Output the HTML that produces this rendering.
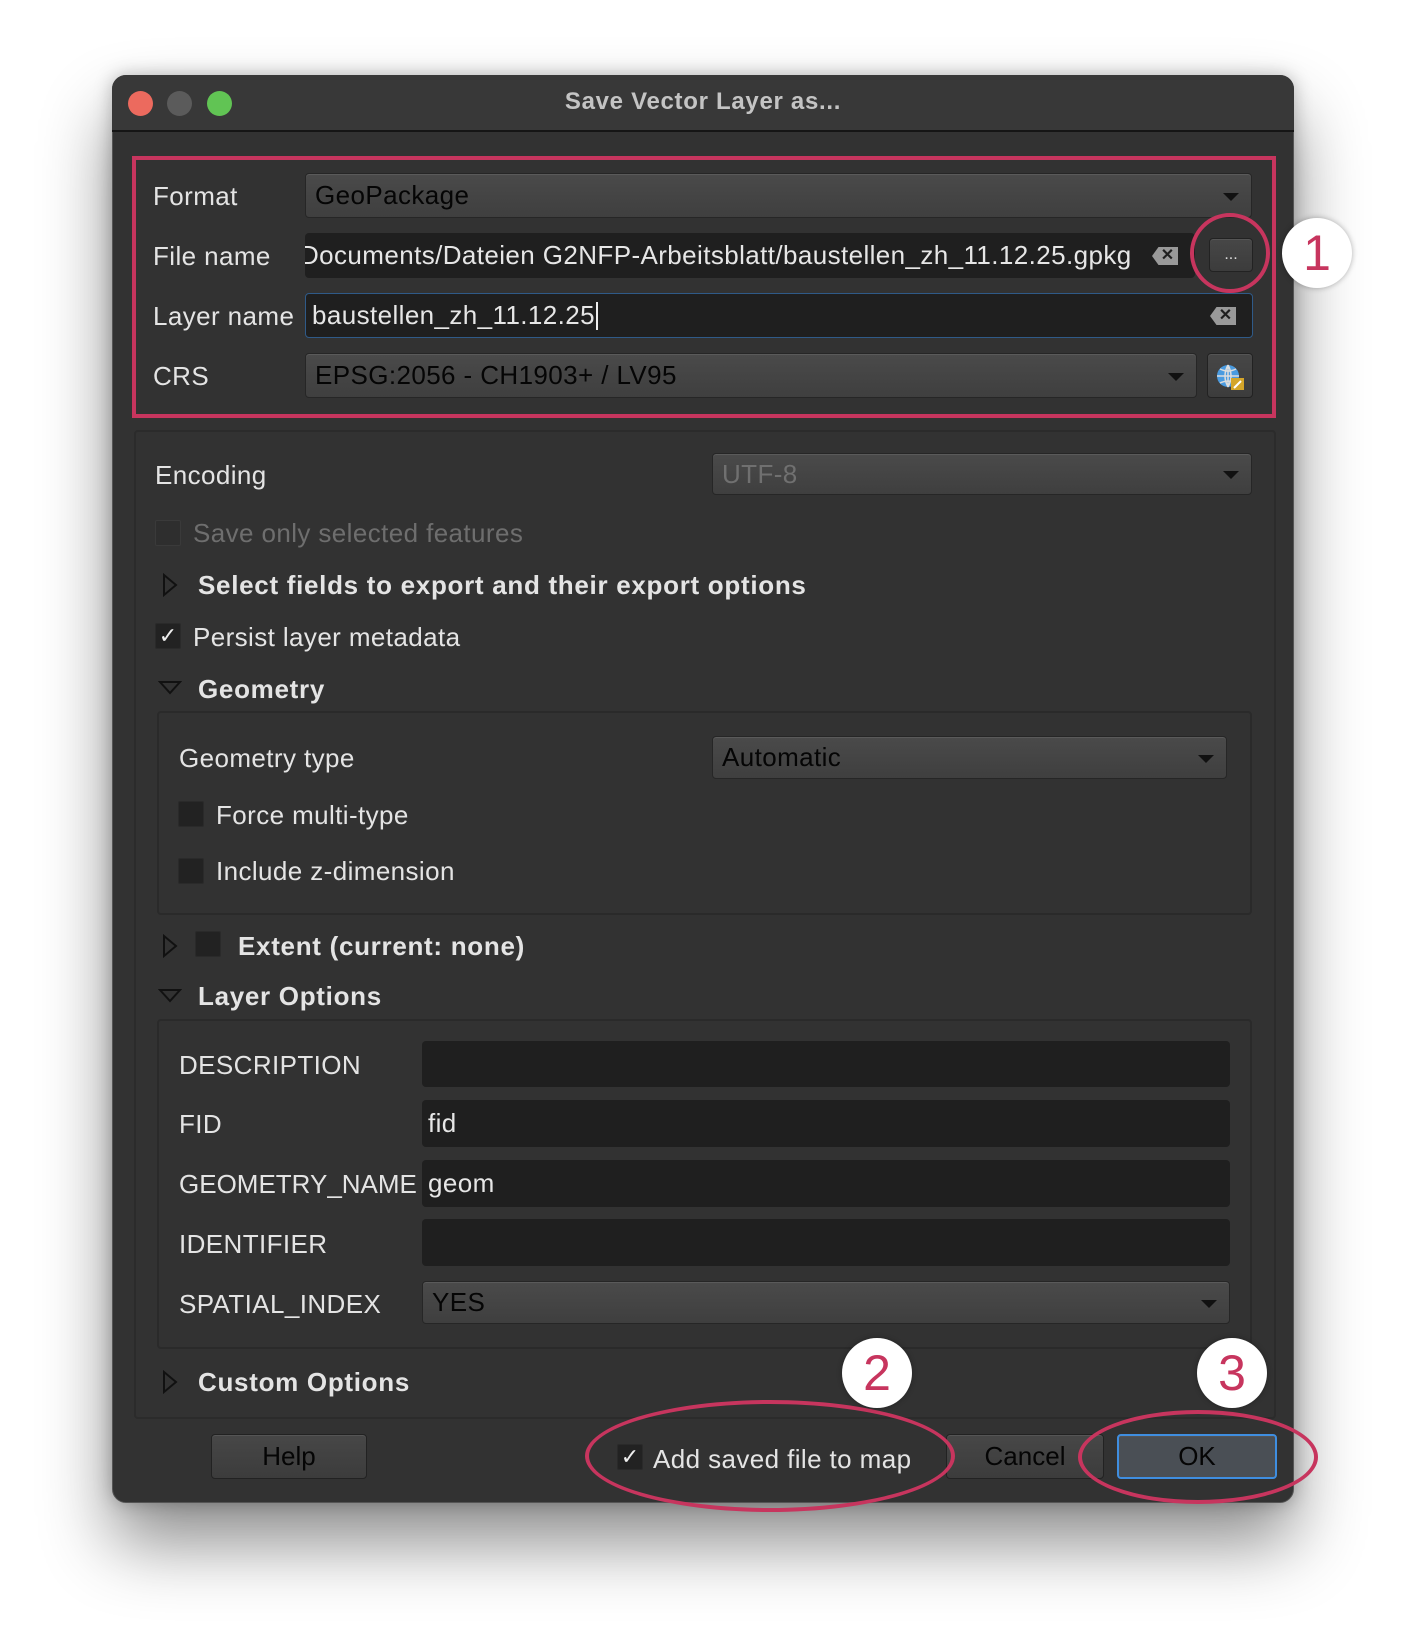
<!DOCTYPE html>
<html><head><meta charset="utf-8"><style>
*{box-sizing:border-box;margin:0;padding:0}
body{width:1406px;height:1650px;background:#fff;position:relative;overflow:hidden;font-family:"Liberation Sans",sans-serif;color:#e4e4e4}
.a{position:absolute}
.win{left:112px;top:75px;width:1182px;height:1428px;background:#323232;border-radius:14px;box-shadow:0 40px 70px rgba(0,0,0,.45),0 0 18px rgba(0,0,0,.25);border:1px solid #555}
.tb{left:112px;top:75px;width:1182px;height:57px;background:#383838;border-radius:14px 14px 0 0;border-bottom:2px solid #151515}
.dot{width:25px;height:25px;border-radius:50%;top:91px}
.lbl{font-size:26px;line-height:30px;transform:translateY(-50%);letter-spacing:0.4px;white-space:nowrap}
.b{font-weight:bold;letter-spacing:0.7px}
.combo{background:linear-gradient(#4a4a4a,#3f3f3f);border:1px solid #262626;border-radius:4px;box-shadow:inset 0 1px 0 #5a5a5a;color:#050505;font-size:26px;letter-spacing:0.4px;padding-left:9px;display:flex;align-items:center}
.combo:after{content:"";position:absolute;right:12px;top:50%;margin-top:-3px;border-left:8px solid transparent;border-right:8px solid transparent;border-top:8px solid #111}
.field{background:#1f1f1f;border-radius:4px;font-size:26px;letter-spacing:0.4px;color:#e6e6e6;padding-left:6px;display:flex;align-items:center;overflow:hidden;white-space:nowrap}
.cb{width:26px;height:26px;background:#222;border:1px solid #2a2a2a;border-radius:2px;color:#eee;font-size:22px;line-height:24px;text-align:center}
.btn{background:linear-gradient(#474747,#3c3c3c);border:1px solid #222;border-radius:4px;box-shadow:inset 0 1px 0 #555;color:#050505;font-size:26px;display:flex;align-items:center;justify-content:center}
.box{border:2px solid #2a2a2a;border-radius:4px}
.clr{width:26px;height:18px;background:#999;clip-path:polygon(25% 0,100% 0,100% 100%,25% 100%,0 50%);color:#1f1f1f;font-size:16px;font-weight:bold;text-align:center;line-height:18px;padding-left:5px}
.num{width:70px;height:70px;border-radius:50%;background:#fff;color:#c7355e;font-size:50px;text-align:center;line-height:70px;box-shadow:0 0 6px rgba(0,0,0,.3)}
</style></head><body>
<div class="a win"></div>
<div class="a tb"></div>
<div class="a dot" style="left:128px;background:#ec6a5e"></div>
<div class="a dot" style="left:167px;background:#5b5b5b"></div>
<div class="a dot" style="left:207px;background:#61c454"></div>
<div class="a b" style="left:112px;width:1182px;top:88px;text-align:center;font-size:24px;color:#c4c4c4">Save Vector Layer as...</div>

<div class="a lbl" style="left:153px;top:196px">Format</div>
<div class="a combo" style="left:305px;top:173px;width:947px;height:45px">GeoPackage</div>
<div class="a lbl" style="left:153px;top:256px">File name</div>
<div class="a field" style="left:305px;top:233px;width:890px;height:45px;padding-left:0"><span style="margin-left:-5px">Documents/Dateien G2NFP-Arbeitsblatt/baustellen_zh_11.12.25.gpkg</span></div>
<div class="a clr" style="left:1152px;top:247px">✕</div>
<div class="a btn" style="left:1209px;top:238px;width:44px;height:34px;color:#ddd;font-size:16px">...</div>
<div class="a lbl" style="left:153px;top:316px">Layer name</div>
<div class="a field" style="left:305px;top:293px;width:948px;height:45px;border:1px solid #2f5a88">baustellen_zh_11.12.25<span style="display:inline-block;width:2px;height:28px;background:#eee;margin-left:1px"></span></div>
<div class="a clr" style="left:1210px;top:307px">✕</div>
<div class="a lbl" style="left:153px;top:376px">CRS</div>
<div class="a combo" style="left:305px;top:353px;width:892px;height:45px">EPSG:2056 - CH1903+ / LV95</div>
<div class="a btn" style="left:1207px;top:353px;width:46px;height:45px">
<svg width="32" height="32" viewBox="0 0 32 32"><circle cx="14" cy="16" r="11" fill="#4a9be0"/><path d="M3 16h22M14 5v22M6 9q8 4 16 0M6 23q8-4 16 0M14 5q-6 11 0 22M14 5q6 11 0 22" stroke="#ddd" stroke-width="1.5" fill="none"/><rect x="17" y="18" width="13" height="12" fill="#d4a52a"/><path d="M20 28l7-7" stroke="#fff" stroke-width="2"/></svg></div>
<div class="a" style="left:132px;top:156px;width:1144px;height:262px;border:4px solid #c7355e"></div>
<div class="a" style="left:1190px;top:213px;width:80px;height:80px;border:4px solid #c7355e;border-radius:50%"></div>
<div class="a num" style="left:1282px;top:218px">1</div>

<div class="a box" style="left:134px;top:430px;width:1142px;height:989px;border-color:#2b2b2b"></div>
<div class="a lbl" style="left:155px;top:475px">Encoding</div>
<div class="a combo" style="left:712px;top:453px;width:540px;height:42px;color:#707070">UTF-8</div>
<div class="a cb" style="left:155px;top:520px;border-color:#3a3a3a;background:#2e2e2e"></div>
<div class="a lbl" style="left:193px;top:533px;color:#6e6e6e">Save only selected features</div>
<svg class="a" style="left:162px;top:573px" width="16" height="24"><path d="M2 2L14 12L2 22Z" fill="none" stroke="#111" stroke-width="2"/></svg>
<div class="a lbl b" style="left:198px;top:585px">Select fields to export and their export options</div>
<div class="a cb" style="left:155px;top:623px">✓</div>
<div class="a lbl" style="left:193px;top:637px">Persist layer metadata</div>
<svg class="a" style="left:158px;top:680px" width="24" height="16"><path d="M2 2L22 2L12 13Z" fill="none" stroke="#111" stroke-width="2"/></svg>
<div class="a lbl b" style="left:198px;top:689px">Geometry</div>
<div class="a box" style="left:157px;top:711px;width:1095px;height:204px"></div>
<div class="a lbl" style="left:179px;top:758px">Geometry type</div>
<div class="a combo" style="left:712px;top:736px;width:515px;height:43px">Automatic</div>
<div class="a cb" style="left:178px;top:801px"></div>
<div class="a lbl" style="left:216px;top:815px">Force multi-type</div>
<div class="a cb" style="left:178px;top:858px"></div>
<div class="a lbl" style="left:216px;top:871px">Include z-dimension</div>
<svg class="a" style="left:162px;top:934px" width="16" height="24"><path d="M2 2L14 12L2 22Z" fill="none" stroke="#111" stroke-width="2"/></svg>
<div class="a cb" style="left:195px;top:931px"></div>
<div class="a lbl b" style="left:238px;top:946px">Extent (current: none)</div>
<svg class="a" style="left:158px;top:988px" width="24" height="16"><path d="M2 2L22 2L12 13Z" fill="none" stroke="#111" stroke-width="2"/></svg>
<div class="a lbl b" style="left:198px;top:996px">Layer Options</div>
<div class="a box" style="left:157px;top:1019px;width:1095px;height:330px"></div>
<div class="a lbl" style="left:179px;top:1065px">DESCRIPTION</div>
<div class="a field" style="left:422px;top:1041px;width:808px;height:46px"></div>
<div class="a lbl" style="left:179px;top:1124px">FID</div>
<div class="a field" style="left:422px;top:1100px;width:808px;height:47px">fid</div>
<div class="a lbl" style="left:179px;top:1184px;letter-spacing:0">GEOMETRY_NAME</div>
<div class="a field" style="left:422px;top:1160px;width:808px;height:47px">geom</div>
<div class="a lbl" style="left:179px;top:1244px">IDENTIFIER</div>
<div class="a field" style="left:422px;top:1219px;width:808px;height:47px"></div>
<div class="a lbl" style="left:179px;top:1304px">SPATIAL_INDEX</div>
<div class="a combo" style="left:422px;top:1281px;width:808px;height:43px">YES</div>
<svg class="a" style="left:162px;top:1370px" width="16" height="24"><path d="M2 2L14 12L2 22Z" fill="none" stroke="#111" stroke-width="2"/></svg>
<div class="a lbl b" style="left:198px;top:1382px">Custom Options</div>

<div class="a btn" style="left:211px;top:1434px;width:156px;height:45px">Help</div>
<div class="a cb" style="left:617px;top:1444px">✓</div>
<div class="a lbl" style="left:653px;top:1459px">Add saved file to map</div>
<div class="a btn" style="left:946px;top:1434px;width:158px;height:45px">Cancel</div>
<div class="a btn" style="left:1117px;top:1434px;width:160px;height:45px;border:2px solid #3f8ee0;background:#4a4f55">OK</div>
<div class="a" style="left:585px;top:1400px;width:370px;height:112px;border:4px solid #c7355e;border-radius:50%"></div>
<div class="a" style="left:1078px;top:1410px;width:240px;height:94px;border:4px solid #c7355e;border-radius:50%"></div>
<div class="a num" style="left:842px;top:1338px">2</div>
<div class="a num" style="left:1197px;top:1338px">3</div>
</body></html>
